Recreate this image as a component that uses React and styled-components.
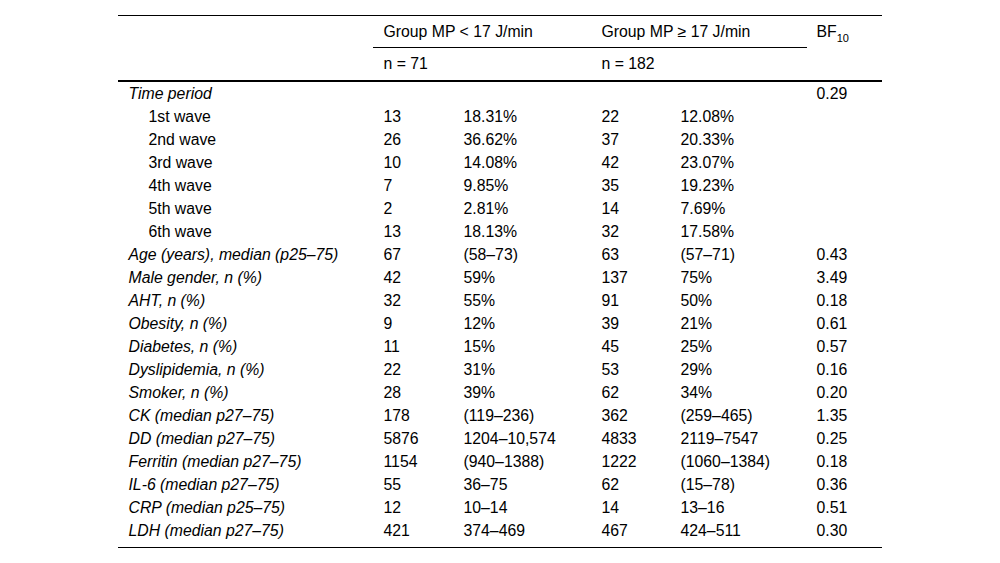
import React from "react";
import styled, { createGlobalStyle } from "styled-components";

const GlobalStyle = createGlobalStyle`
  body {
    margin: 0;
    background: #fff;
    font-family: "Liberation Sans", Arial, sans-serif;
    color: #000;
  }
`;

const rows = [
  { label: "Time period", bf: "0.29" },
  { label: "1st wave", sub: true, a: ["13", "18.31%"], b: ["22", "12.08%"] },
  { label: "2nd wave", sub: true, a: ["26", "36.62%"], b: ["37", "20.33%"] },
  { label: "3rd wave", sub: true, a: ["10", "14.08%"], b: ["42", "23.07%"] },
  { label: "4th wave", sub: true, a: ["7", "9.85%"], b: ["35", "19.23%"] },
  { label: "5th wave", sub: true, a: ["2", "2.81%"], b: ["14", "7.69%"] },
  { label: "6th wave", sub: true, a: ["13", "18.13%"], b: ["32", "17.58%"] },
  { label: "Age (years), median (p25–75)", a: ["67", "(58–73)"], b: ["63", "(57–71)"], bf: "0.43" },
  { label: "Male gender, n (%)", a: ["42", "59%"], b: ["137", "75%"], bf: "3.49" },
  { label: "AHT, n (%)", a: ["32", "55%"], b: ["91", "50%"], bf: "0.18" },
  { label: "Obesity, n (%)", a: ["9", "12%"], b: ["39", "21%"], bf: "0.61" },
  { label: "Diabetes, n (%)", a: ["11", "15%"], b: ["45", "25%"], bf: "0.57" },
  { label: "Dyslipidemia, n (%)", a: ["22", "31%"], b: ["53", "29%"], bf: "0.16" },
  { label: "Smoker, n (%)", a: ["28", "39%"], b: ["62", "34%"], bf: "0.20" },
  { label: "CK (median p27–75)", a: ["178", "(119–236)"], b: ["362", "(259–465)"], bf: "1.35" },
  { label: "DD (median p27–75)", a: ["5876", "1204–10,574"], b: ["4833", "2119–7547"], bf: "0.25" },
  { label: "Ferritin (median p27–75)", a: ["1154", "(940–1388)"], b: ["1222", "(1060–1384)"], bf: "0.18" },
  { label: "IL-6 (median p27–75)", a: ["55", "36–75"], b: ["62", "(15–78)"], bf: "0.36" },
  { label: "CRP (median p25–75)", a: ["12", "10–14"], b: ["14", "13–16"], bf: "0.51" },
  { label: "LDH (median p27–75)", a: ["421", "374–469"], b: ["467", "424–511"], bf: "0.30" },
];

export default function App() {
  return (
    <>
      <GlobalStyle />
      <Page>
        <Table>
          <colgroup>
            <col style={{ width: 255 }} />
            <col style={{ width: 80 }} />
            <col style={{ width: 138 }} />
            <col style={{ width: 79 }} />
            <col style={{ width: 136 }} />
            <col style={{ width: 75 }} />
          </colgroup>
          <thead>
            <tr>
              <HeadCell rowSpan={2} />
              <HeadCell colSpan={2} underline>
                Group MP &lt; 17 J/min
              </HeadCell>
              <HeadCell colSpan={2} underline>
                Group MP ≥ 17 J/min
              </HeadCell>
              <HeadCell rowSpan={2}>
                BF<Sub>10</Sub>
              </HeadCell>
            </tr>
            <tr>
              <HeadCell colSpan={2} last>
                n = 71
              </HeadCell>
              <HeadCell colSpan={2} last>
                n = 182
              </HeadCell>
            </tr>
          </thead>
          <tbody>
            {rows.map((r, i) => {
              const end = i === rows.length - 1;
              return (
                <tr key={r.label}>
                  <Label sub={r.sub} end={end}>
                    {r.label}
                  </Label>
                  <Cell end={end}>{r.a ? r.a[0] : ""}</Cell>
                  <Cell end={end}>{r.a ? r.a[1] : ""}</Cell>
                  <Cell end={end}>{r.b ? r.b[0] : ""}</Cell>
                  <Cell end={end}>{r.b ? r.b[1] : ""}</Cell>
                  <Cell end={end}>{r.bf || ""}</Cell>
                </tr>
              );
            })}
          </tbody>
        </Table>
      </Page>
    </>
  );
}

const Page = styled.div`
  padding-top: 15px;
  display: flex;
  justify-content: center;
`;

const Table = styled.table`
  border-collapse: collapse;
  table-layout: fixed;
  width: 763px;
  border-top: 1px solid #000;
  border-bottom: 1px solid #000;
  font-size: 15.8px;
  line-height: 15px;
`;

const HeadCell = styled.th`
  font-weight: normal;
  text-align: left;
  vertical-align: top;
  padding: 8px 10px ${({ last }) => (last ? "9px" : "8px")};
  border-bottom: ${({ underline, last }) =>
    underline ? "1px solid #000" : last ? "2px solid #000" : "none"};
  &[rowspan] {
    border-bottom: 2px solid #000;
  }
`;

const Sub = styled.sub`
  font-size: 11px;
  vertical-align: -5px;
  line-height: 0;
`;

const Cell = styled.td`
  padding: 4px 10px ${({ end }) => (end ? "9px" : "4px")};
  white-space: nowrap;
`;

const Label = styled(Cell)`
  font-style: ${({ sub }) => (sub ? "normal" : "italic")};
  padding-left: ${({ sub }) => (sub ? "30px" : "10px")};
`;
